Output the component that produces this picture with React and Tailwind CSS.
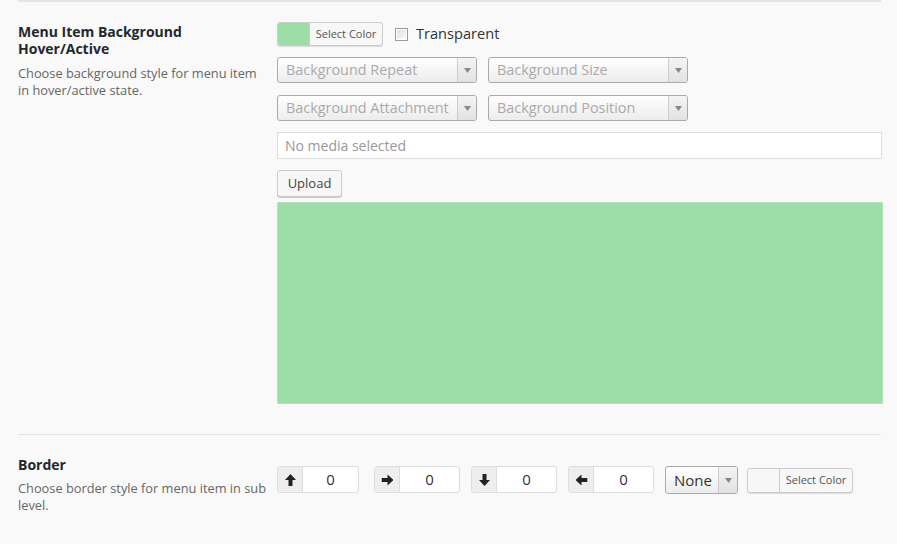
import React from "react";

const font = { fontFamily: '"Open Sans", "Noto Sans", sans-serif' };

function Select({ label, w }) {
  return (
    <div className={`flex h-[26px] ${w} rounded-[3px] border border-[#aaa] bg-gradient-to-b from-white to-[#ececec] overflow-hidden`}>
      <div className="flex-1 flex items-center pl-[8px] text-[14.4px] text-[#aaa] leading-none whitespace-nowrap">{label}</div>
      <div className="w-[19px] border-l border-[#ccc] flex items-center justify-center bg-gradient-to-b from-[#f4f4f4] to-[#e2e2e2]">
        <svg width="7" height="5" viewBox="0 0 7 5"><path d="M0 0h7L3.5 5z" fill="#888" /></svg>
      </div>
    </div>
  );
}

function ColorBtn({ swatch, h }) {
  return (
    <div className={`flex ${h} w-[106px] rounded-[3px] border border-[#ccc] bg-[#f7f7f7] overflow-hidden shadow-[0_1px_0_#ddd]`}>
      <div className={`w-[32px] border-r border-[#ccc] ${swatch}`}></div>
      <div className="flex-1 flex items-center justify-center text-[11px] text-[#555]">Select Color</div>
    </div>
  );
}

function Arrow({ dir }) {
  const rot = { up: 0, right: 90, down: 180, left: 270 }[dir];
  return (
    <svg width="11" height="12" viewBox="0 0 11 12" style={{ transform: `rotate(${rot}deg)` }}>
      <path d="M5.5 0L11 6H7.5V12H3.5V6H0z" fill="#222" />
    </svg>
  );
}

function NumBox({ dir, w }) {
  return (
    <div className={`flex h-[27px] ${w} rounded-[3px] border border-[#ddd] bg-white overflow-hidden`}>
      <div className="w-[25px] bg-[#eee] border-r border-[#ddd] flex items-center justify-center"><Arrow dir={dir} /></div>
      <div className="flex-1 flex items-center justify-center text-[15px] text-[#333]">0</div>
    </div>
  );
}

export default function App() {
  return (
    <div className="w-[897px] h-[544px] bg-[#f9f9f9] overflow-hidden" style={font}>
      <div className="mx-[18px] w-[863px] border-t-2 border-[#e5e5e5]"></div>
      <div className="flex pl-[18px] pt-[20px]">
        <div className="w-[259px]">
          <div className="text-[14px] font-bold text-[#23282d] leading-[17px] pt-[1px]">
            <div>Menu Item Background</div>
            <div>Hover/Active</div>
          </div>
          <div className="w-[250px] text-[12.8px] text-[#666] leading-[17px] mt-[8px]">Choose background style for menu item in hover/active state.</div>
        </div>
        <div className="flex-1 flex flex-col">
          <div className="flex items-center h-[24px]">
            <ColorBtn swatch="bg-[#9ddda7]" h="h-[24px]" />
            <div className="ml-[12px] w-[13px] h-[13px] border border-[#999] bg-gradient-to-br from-[#ddd] to-white shadow-[inset_0_0_0_1px_#fff]"></div>
            <span className="ml-[8px] text-[14.6px] text-[#333]">Transparent</span>
          </div>
          <div className="flex gap-[11px] mt-[11px]">
            <Select label="Background Repeat" w="w-[200px]" />
            <Select label="Background Size" w="w-[200px]" />
          </div>
          <div className="flex gap-[11px] mt-[12px]">
            <Select label="Background Attachment" w="w-[200px]" />
            <Select label="Background Position" w="w-[200px]" />
          </div>
          <div className="mt-[11px] w-[605px] h-[27px] border border-[#ddd] bg-white flex items-center pl-[7px] text-[14px] text-[#999]">No media selected</div>
          <div className="mt-[11px] w-[65px] h-[27px] rounded-[3px] border border-[#ccc] bg-[#f7f7f7] shadow-[0_1px_0_#ccc] flex items-center justify-center text-[13px] text-[#444]">Upload</div>
          <div className="mt-[5px] w-[606px] h-[202px] bg-[#9ddda7] border border-dotted border-[#c6e9cb]"></div>
        </div>
      </div>
      <div className="mx-[18px] mt-[30px] w-[863px] border-t border-[#e5e5e5]"></div>
      <div className="flex pl-[18px] pt-[21px]">
        <div className="w-[259px]">
          <div className="text-[14px] font-bold text-[#23282d] leading-[17px]">Border</div>
          <div className="w-[250px] text-[12.8px] text-[#666] leading-[17px] mt-[7px]">Choose border style for menu item in sub level.</div>
        </div>
        <div className="flex items-start mt-[10px]">
          <NumBox dir="up" w="w-[82px]" />
          <div className="ml-[15px]"><NumBox dir="right" w="w-[86px]" /></div>
          <div className="ml-[11px]"><NumBox dir="down" w="w-[86px]" /></div>
          <div className="ml-[11px]"><NumBox dir="left" w="w-[86px]" /></div>
          <div className="ml-[11px] flex h-[28px] w-[73px] rounded-[3px] border border-[#aaa] bg-gradient-to-b from-white to-[#ececec] overflow-hidden">
            <div className="flex-1 flex items-center pl-[8px] text-[15px] text-[#333]">None</div>
            <div className="w-[19px] border-l border-[#ccc] flex items-center justify-center bg-gradient-to-b from-[#f4f4f4] to-[#e2e2e2]">
              <svg width="7" height="5" viewBox="0 0 7 5"><path d="M0 0h7L3.5 5z" fill="#888" /></svg>
            </div>
          </div>
          <div className="ml-[9px] mt-[2px]"><ColorBtn swatch="bg-[#f7f7f7]" h="h-[25px]" /></div>
        </div>
      </div>
    </div>
  );
}
